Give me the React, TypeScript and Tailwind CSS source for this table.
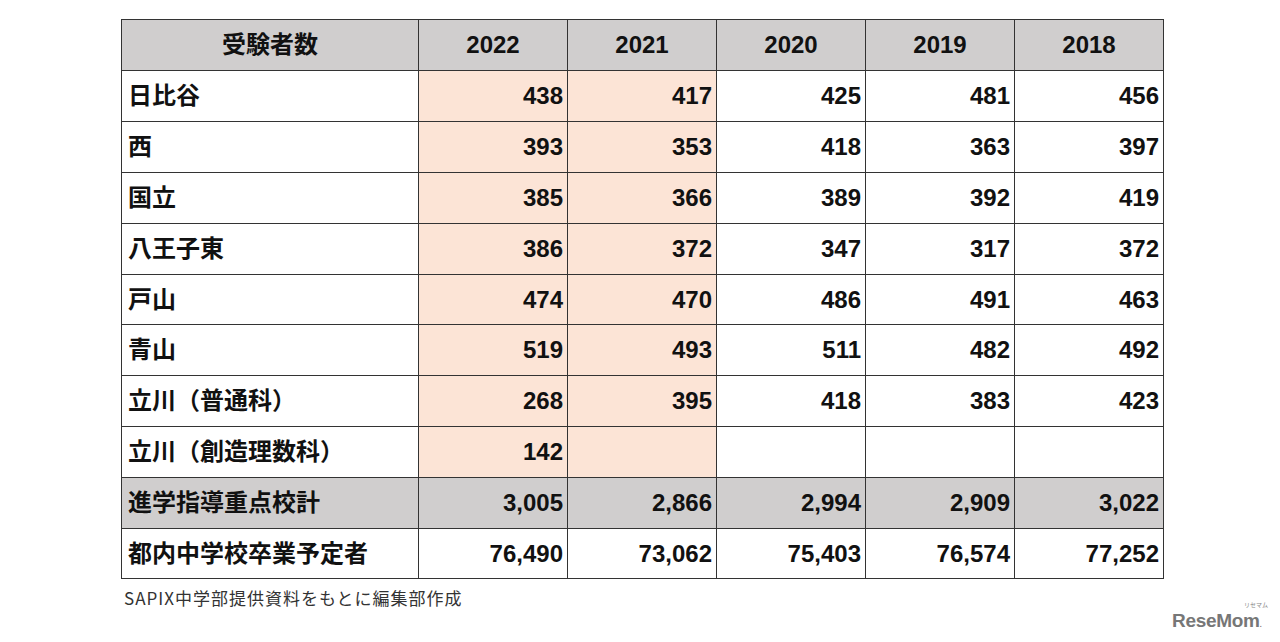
import React from 'react';

type Row = { name: string; values: string[]; total?: boolean };

const YEARS = ['2022', '2021', '2020', '2019', '2018'];

const ROWS: Row[] = [
  { name: '日比谷', values: ['438', '417', '425', '481', '456'] },
  { name: '西', values: ['393', '353', '418', '363', '397'] },
  { name: '国立', values: ['385', '366', '389', '392', '419'] },
  { name: '八王子東', values: ['386', '372', '347', '317', '372'] },
  { name: '戸山', values: ['474', '470', '486', '491', '463'] },
  { name: '青山', values: ['519', '493', '511', '482', '492'] },
  { name: '立川（普通科）', values: ['268', '395', '418', '383', '423'] },
  { name: '立川（創造理数科）', values: ['142', '', '', '', ''] },
  { name: '進学指導重点校計', values: ['3,005', '2,866', '2,994', '2,909', '3,022'], total: true },
  { name: '都内中学校卒業予定者', values: ['76,490', '73,062', '75,403', '76,574', '77,252'] },
];

const JP = "font-['Liberation_Sans','Noto_Sans_CJK_JP',sans-serif]";

export default function App() {
  return (
    <div className="w-[1280px] h-[642px] bg-white relative overflow-hidden">
      <div className="pt-[19px] pl-[121px]">
        <table className={`border-collapse text-[24px] leading-none font-bold text-[#111] ${JP}`}>
          <thead>
            <tr className="h-[51px] bg-[#d0cece]">
              <th className="w-[297px] border border-[#333] text-center font-bold">受験者数</th>
              {YEARS.map((y) => (
                <th key={y} className="w-[149px] border border-[#333] text-center font-bold">
                  {y}
                </th>
              ))}
            </tr>
          </thead>
          <tbody>
            {ROWS.map((row, ri) => (
              <tr key={row.name} className={`${ri % 5 === 4 ? 'h-[50px]' : 'h-[51px]'} ${row.total ? 'bg-[#d0cece]' : ''}`}>
                <td className="border border-[#333] pl-[6px] text-left">{row.name}</td>
                {row.values.map((v, i) => {
                  const peach = !row.total && ri < 8 && i < 2;
                  return (
                    <td
                      key={i}
                      className={`border border-[#333] pr-[4px] text-right ${peach ? 'bg-[#fce4d6]' : ''}`}
                    >
                      {v}
                    </td>
                  );
                })}
              </tr>
            ))}
          </tbody>
        </table>
      </div>
      <div className="pl-[124px] pt-[8px] text-[17px] leading-tight tracking-[1px] text-[#333] font-['Noto_Sans_CJK_JP',sans-serif]">
        SAPIX中学部提供資料をもとに編集部作成
      </div>
      <div className="absolute left-[1172px] top-[611px]">
        <span className="absolute left-[72px] top-[-9px] whitespace-nowrap text-[6px] leading-none text-[#888] font-['Noto_Sans_CJK_JP',sans-serif]">
          リセマム
        </span>
        <span className="block text-[19px] leading-none font-black tracking-[-0.3px] text-[#777] font-['Liberation_Sans',sans-serif]">
          ReseMom<span className="text-[7px]">.</span>
        </span>
      </div>
    </div>
  );
}
